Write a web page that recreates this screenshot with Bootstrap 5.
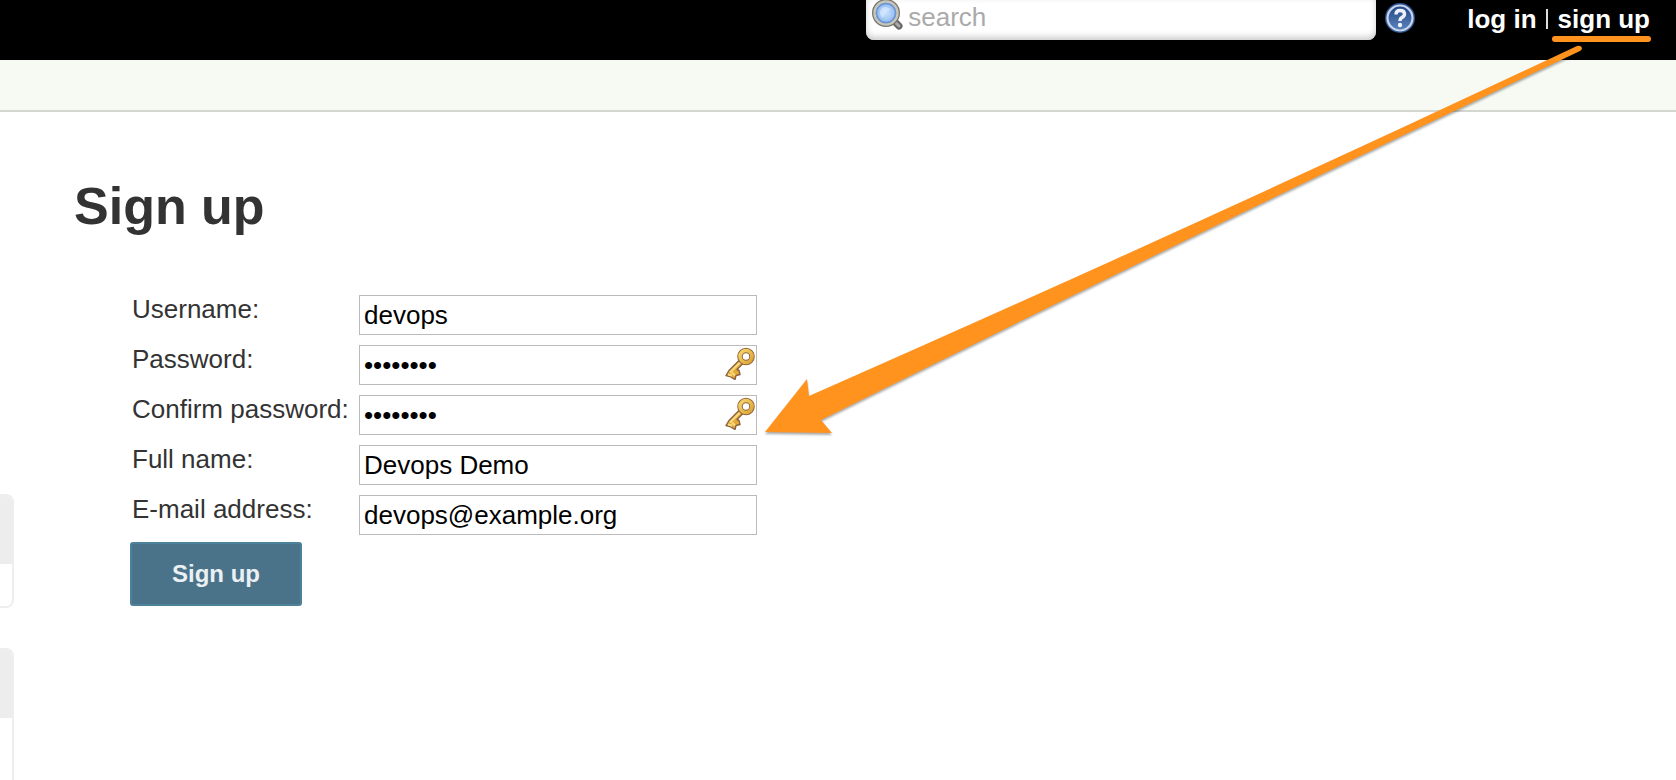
<!DOCTYPE html>
<html lang="en">
<head>
<meta charset="utf-8">
<meta name="viewport" content="width=device-width, initial-scale=1">
<title>Sign up</title>
<link href="https://cdn.jsdelivr.net/npm/bootstrap@5.3.0/dist/css/bootstrap.min.css" rel="stylesheet">
<style>
body { font: 26px/30px "Liberation Sans", Arial, sans-serif; color: #333; overflow: hidden; }
.site-top { height: 60px; background: #000; padding-right: 26px; }
.search-box { width: 510px; }
.search-box input { height: 40px; padding: 0 8px 6px 42px; border: 0; border-radius: 0 0 8px 8px; font-size: 26px; line-height: 30px; background: #fff; box-shadow: inset 0 -3px 6px #ccc; }
.search-box input::placeholder { color: #aaa; }
.search-box svg { left: 5px; top: -2px; }
.help-link { margin: 1px 51px 0 8px; }
.account { padding-top: 4px; color: #fff; }
.account a { color: #fff; font-weight: bold; text-decoration: none; }
.divider-bar { width: 2px; height: 20px; margin: 5px 10px 0 9px; background: #ddd; }
.marked::after { content: ""; position: absolute; left: -6px; right: -1px; top: 32px; height: 6px; border-radius: 3px; background: #ff931e; }
.sub-bar { height: 52px; background: #f7faf3; border-bottom: 2px solid #d3d7cf; }
.side { width: 14px; padding-top: 382px; gap: 40px; }
.side-panel { height: 114px; border: 2px solid #eee; border-left: 0; border-radius: 0 8px 8px 0; }
.side-panel > div { height: 68px; background: #ededed; border-radius: 0 6px 0 0; }
.side-panel.tall { height: auto; border-bottom: 0; border-bottom-right-radius: 0; }
.content { padding: 64px 0 0 60px; }
h1 { font-size: 52px; line-height: 60px; font-weight: bold; margin: 0 0 59px; }
.signup { margin-left: 56px; }
.fields { display: grid; grid-template-columns: 229px 398px; row-gap: 10px; }
.fields label { padding-left: 2px; line-height: 28px; white-space: nowrap; }
.fields input { height: 40px; padding: 0 4px; border: 1px solid #bbb; border-radius: 0; color: #000; font-size: 26px; line-height: 30px; }
.key-icon { right: 1px; top: 2px; }
.btn-signup { width: 172px; height: 64px; margin-top: 7px; padding: 0; border: 2px solid #4b829a; border-radius: 3px; background: #4a738a; color: #eaf0f4; font-size: 24px; font-weight: bold; }
.pointer { left: 760px; top: 40px; width: calc(100% - 852px); height: 402px; pointer-events: none; filter: drop-shadow(0 2px 1px #0005); }
</style>
</head>
<body class="vh-100 d-flex flex-column position-relative">
<svg width="0" height="0" class="position-absolute" aria-hidden="true">
  <defs>
    <linearGradient id="gold" x1="0" y1="0" x2="1" y2="1"><stop offset="0" stop-color="#f6d56c"/><stop offset="1" stop-color="#dca436"/></linearGradient>
    <symbol id="key" viewBox="0 0 32 32">
      <path d="M17 11 5 23l-3 5 4 1 5 3 1-4 4-1-1-4-2-1 8-8Z" fill="#e5aa36" stroke="#8b6240" stroke-width="1.4" stroke-linejoin="round"/>
      <path d="M18 13 6 25m2 0 3 3m-7-1 4 1" stroke="#f8dc84" stroke-width="2" fill="none"/>
      <circle cx="22" cy="9" r="6" fill="none" stroke="#94683d" stroke-width="5.6"/>
      <circle cx="22" cy="9" r="6" fill="none" stroke="url(#gold)" stroke-width="3.6"/>
    </symbol>
  </defs>
</svg>

<header class="site-top d-flex justify-content-end align-items-start flex-shrink-0">
  <form class="search-box position-relative" role="search">
    <input class="form-control" type="text" placeholder="search" aria-label="search">
    <svg class="position-absolute" width="34" height="34" viewBox="0 0 34 34" aria-hidden="true">
      <defs><radialGradient id="lens"><stop offset="0" stop-color="#c9e2ff"/><stop offset="1" stop-color="#94bcf0"/></radialGradient></defs>
      <path d="m24 24 4 4" stroke="#666" stroke-width="7" stroke-linecap="round"/>
      <path d="m23 23 5 5" stroke="#aaa" stroke-width="3" stroke-linecap="round"/>
      <circle cx="15" cy="15" r="12" fill="#fff" stroke="#77776f" stroke-width="4"/>
      <circle cx="15" cy="15" r="11.5" fill="none" stroke="#c6c6bc" stroke-width="2.4"/>
      <circle cx="15" cy="15" r="9.5" fill="url(#lens)" stroke="#6694d8" stroke-width="1.5"/>
      <path d="M9 14q1-5 6-5l5 2-6 4-2 5q-3-2-3-6Z" fill="#e0efff" opacity=".6"/>
    </svg>
  </form>
  <a class="help-link" href="#" aria-label="Help">
    <svg class="d-block" width="32" height="32" viewBox="0 0 32 32" aria-hidden="true">
      <defs><linearGradient id="blue" x1="0" y1="0" x2="0" y2="1"><stop offset="0" stop-color="#234684"/><stop offset="1" stop-color="#5c84bd"/></linearGradient></defs>
      <circle cx="16" cy="17" r="15" fill="#2f5290"/>
      <circle cx="16" cy="17" r="12.5" fill="url(#blue)" stroke="#c6d5ec" stroke-width="2.2"/>
      <path d="M12 13.500q0-4 4-4 4.500 0 4.500 3.500 0 2-2.500 3.500-2 1-2 3.500" fill="none" stroke="#eef3fa" stroke-width="3.400"/>
      <circle cx="16" cy="24" r="2.200" fill="#eef3fa"/>
    </svg>
  </a>
  <nav class="account d-flex" aria-label="Account">
    <a href="#">log in</a>
    <span class="divider-bar"></span>
    <a class="marked position-relative" href="#">sign up</a>
  </nav>
</header>
<div class="sub-bar flex-shrink-0"></div>

<div class="d-flex flex-grow-1">
  <aside class="side d-flex flex-column flex-shrink-0">
    <div class="side-panel flex-shrink-0"><div></div></div>
    <div class="side-panel tall flex-grow-1"><div></div></div>
  </aside>
  <main class="content flex-grow-1">
    <h1>Sign up</h1>
    <form class="signup">
      <div class="fields">
        <label for="username">Username:</label>
        <input class="form-control" id="username" type="text" value="devops">
        <label for="password">Password:</label>
        <div class="position-relative">
          <input class="form-control" id="password" type="password" value="abcdefgh">
          <svg class="key-icon position-absolute" width="32" height="33" aria-hidden="true"><use href="#key"/></svg>
        </div>
        <label for="confirm">Confirm password:</label>
        <div class="position-relative">
          <input class="form-control" id="confirm" type="password" value="abcdefgh">
          <svg class="key-icon position-absolute" width="32" height="33" aria-hidden="true"><use href="#key"/></svg>
        </div>
        <label for="fullname">Full name:</label>
        <input class="form-control" id="fullname" type="text" value="Devops Demo">
        <label for="email">E-mail address:</label>
        <input class="form-control" id="email" type="email" value="devops@example.org">
      </div>
      <button class="btn btn-signup" type="submit">Sign up</button>
    </form>
  </main>
</div>

<svg class="pointer position-absolute" viewBox="0 0 824 402" preserveAspectRatio="none" aria-hidden="true">
  <path d="M5 392 47 339 49 356Q433 187 817 6 821 5 822 8 822 10 820 11 440 191 61 380L72 393Z" fill="#ff931e"/>
</svg>
<script src="https://cdn.jsdelivr.net/npm/bootstrap@5.3.0/dist/js/bootstrap.bundle.min.js"></script>
</body>
</html>
